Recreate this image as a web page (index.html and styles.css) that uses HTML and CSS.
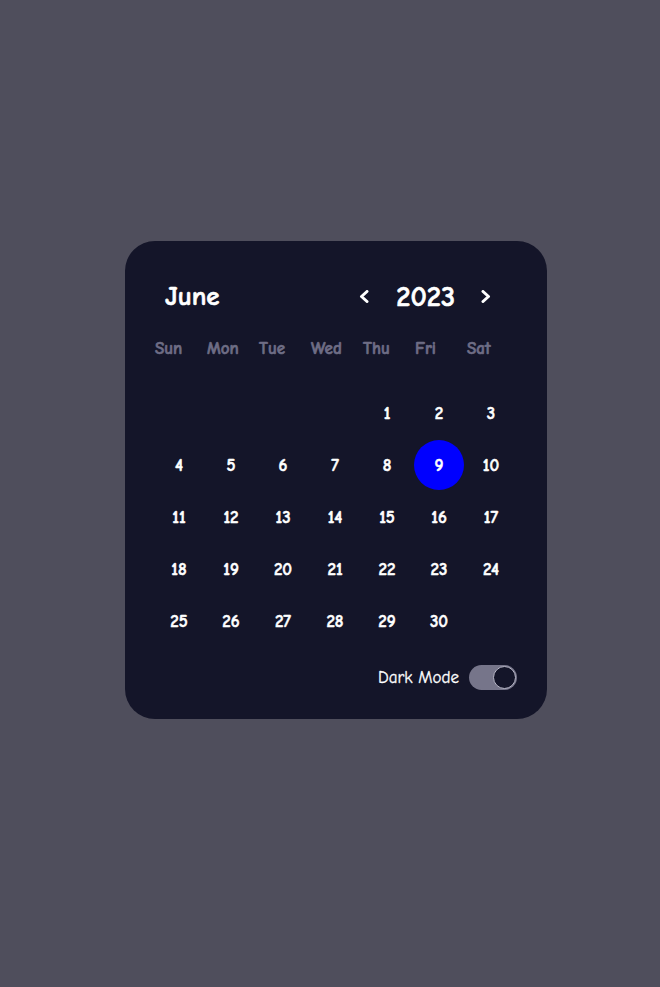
FILE: index.html
```html
<!DOCTYPE html>
<html lang="en">
<head>
<meta charset="utf-8">
<title>Calendar</title>
<link rel="stylesheet" href="styles.css">
</head>
<body>
<div class="calendar">
  <div class="header">
    <div class="month">June</div>
    <div class="year-nav">
      <svg class="arrow" width="10" height="13" viewBox="0 0 10 13"><path d="M8 1.5 L2.5 6.5 L8 11.5" fill="none" stroke="#ffffff" stroke-width="3" stroke-linecap="round" stroke-linejoin="round"/></svg>
      <span class="year">2023</span>
      <svg class="arrow" width="10" height="13" viewBox="0 0 10 13"><path d="M2 1.5 L7.5 6.5 L2 11.5" fill="none" stroke="#ffffff" stroke-width="3" stroke-linecap="round" stroke-linejoin="round"/></svg>
    </div>
  </div>
  <div class="weekdays">
    <span>Sun</span><span>Mon</span><span>Tue</span><span>Wed</span><span>Thu</span><span>Fri</span><span>Sat</span>
  </div>
  <div class="days">
    <span></span><span></span><span></span><span></span>
    <span>1</span><span>2</span><span>3</span>
    <span>4</span><span>5</span><span>6</span><span>7</span><span>8</span><span class="today">9</span><span>10</span>
    <span>11</span><span>12</span><span>13</span><span>14</span><span>15</span><span>16</span><span>17</span>
    <span>18</span><span>19</span><span>20</span><span>21</span><span>22</span><span>23</span><span>24</span>
    <span>25</span><span>26</span><span>27</span><span>28</span><span>29</span><span>30</span>
  </div>
  <div class="footer">
    <span class="mode-label">Dark Mode</span>
    <span class="toggle"><span class="knob"></span></span>
  </div>
</div>
</body>
</html>
```
FILE: styles.css
```css
html, body {
  margin: 0;
  padding: 0;
  background: #4f4e5c;
}
body {
  font-family: "Comic Sans MS", "Comic Neue", cursive;
  color: #ffffff;
  padding-top: 241px;
  padding-left: 12px;
  display: flex;
  flex-direction: column;
  align-items: center;
  min-height: 987px;
  box-sizing: border-box;
}
.calendar {
  width: 422px;
  box-sizing: border-box;
  background: #141529;
  border-radius: 30px;
  padding: 35px 30px 29px 28px;
}
.header {
  height: 40px;
  display: flex;
  align-items: center;
  justify-content: space-between;
  padding: 0 26px 0 12px;
}
.month {
  font-size: 27px;
  font-weight: bold;
  -webkit-text-stroke: 0.6px #ffffff;
}
.year-nav {
  display: flex;
  align-items: center;
}
.year {
  font-size: 28.5px;
  font-weight: bold;
  -webkit-text-stroke: 0.6px #ffffff;
  margin: 0 26px 0 27px;
}
.arrow {
  display: block;
  margin-top: 1px;
}
.weekdays {
  margin-top: 23px;
  height: 20px;
  display: grid;
  grid-template-columns: repeat(7, 52px);
  padding-left: 2px;
  color: #6e6d85;
  font-size: 17px;
  font-weight: bold;
  line-height: 20px;
  -webkit-text-stroke: 0.6px #6e6d85;
}
.days {
  margin-top: 28px;
  display: grid;
  grid-template-columns: repeat(7, 52px);
  grid-auto-rows: 52px;
  font-size: 17px;
  font-weight: bold;
  -webkit-text-stroke: 0.5px #ffffff;
}
.days span {
  display: flex;
  align-items: center;
  justify-content: center;
  border-radius: 50%;
}
.days .today {
  background: #0000ff;
  margin: 1px;
}
.footer {
  margin-top: 18px;
  display: flex;
  justify-content: flex-end;
  align-items: center;
  gap: 10px;
  height: 25px;
}
.mode-label {
  font-size: 17px;
  -webkit-text-stroke: 0.3px #ffffff;
}
.toggle {
  width: 48px;
  height: 25px;
  border-radius: 13px;
  background: #76758a;
  display: flex;
  align-items: center;
  justify-content: flex-end;
  padding: 0 1px;
  box-sizing: border-box;
}
.knob {
  width: 21px;
  height: 21px;
  border-radius: 50%;
  background: #141529;
  border: 1px solid #b9b8c8;
}
```
